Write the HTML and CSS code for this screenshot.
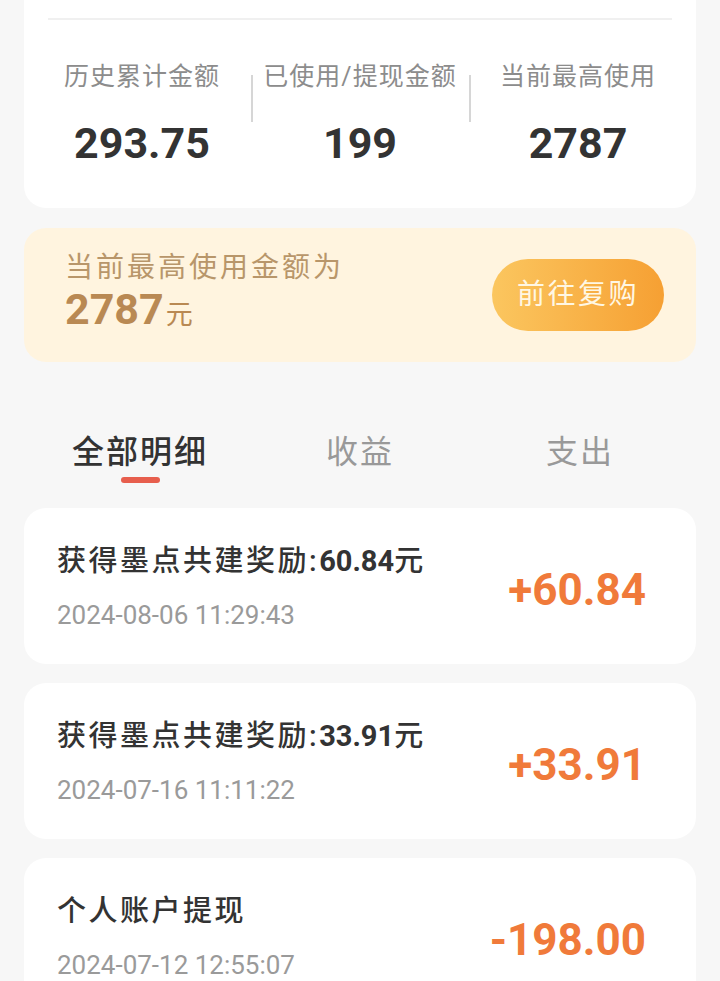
FILE: index.html
```html
<!DOCTYPE html>
<html lang="zh-CN">

<head>
    <meta charset="UTF-8">
    <title>我的账户明细</title>
    <link rel="stylesheet" href="styles.css">
</head>

<body>
    <div class="page">
        <!-- 金额汇总 -->
        <div class="summary-card">
            <div class="summary-line"></div>
            <div class="stats">
                <div class="stat">
                    <div class="stat-label">历史累计金额</div>
                    <div class="stat-value">293.75</div>
                </div>
                <div class="stat">
                    <div class="stat-label">已使用/提现金额</div>
                    <div class="stat-value">199</div>
                </div>
                <div class="stat">
                    <div class="stat-label">当前最高使用</div>
                    <div class="stat-value">2787</div>
                </div>
            </div>
        </div>

        <div class="limit-box">
            <div class="limit-text">
                <div class="limit-title">当前最高使用金额为</div>
                <div class="limit-amount"><span class="limit-num">2787</span><span class="limit-unit">元</span></div>
            </div>
            <div class="rebuy-btn">前往复购</div>
        </div>

        <div class="tabs">
            <div class="tab active">全部明细</div>
            <div class="tab">收益</div>
            <div class="tab">支出</div>
        </div>

        <div class="records">
            <div class="record">
                <div class="record-info">
                    <div class="record-title">获得墨点共建奖励:<b>60.84</b>元</div>
                    <div class="record-time">2024-08-06 11:29:43</div>
                </div>
                <div class="record-amount">+60.84</div>
            </div>
            <div class="record">
                <div class="record-info">
                    <div class="record-title">获得墨点共建奖励:<b>33.91</b>元</div>
                    <div class="record-time">2024-07-16 11:11:22</div>
                </div>
                <div class="record-amount">+33.91</div>
            </div>
            <div class="record">
                <div class="record-info">
                    <div class="record-title">个人账户提现</div>
                    <div class="record-time">2024-07-12 12:55:07</div>
                </div>
                <div class="record-amount">-198.00</div>
            </div>
        </div>
    </div>
</body>

</html>
```

FILE: styles.css
```css
body {
    font-family: Roboto, "Noto Sans CJK SC", sans-serif;
    margin: 0;
    padding: 0;
    background-color: #f7f7f7;
    color: #333;
}

.page {
    padding: 0 24px;
}

/* 汇总卡片 */
.summary-card {
    background-color: #ffffff;
    border-radius: 0 0 22px 22px;
    padding-top: 18px;
    height: 190px;
}

.summary-line {
    height: 2px;
    margin: 0 24px;
    background-color: #f0f0f0;
}

.stats {
    display: flex;
    padding: 39px 9px 0;
}

.stat {
    flex: 1;
    position: relative;
    text-align: center;
}

.stat + .stat::before {
    content: "";
    position: absolute;
    left: 0;
    top: 16px;
    width: 2px;
    height: 47px;
    background-color: #d6d6d6;
}

.stat-label {
    font-size: 25px;
    line-height: 36px;
    letter-spacing: 1px;
    color: #8c8c8c;
}

.stat-value {
    margin-top: 23px;
    font-size: 43px;
    line-height: 50px;
    font-weight: 700;
    color: #333;
}

/* 最高使用金额 */
.limit-box {
    display: flex;
    align-items: center;
    justify-content: space-between;
    height: 134px;
    margin-top: 20px;
    padding: 0 32px 0 41px;
    background-color: #fff4df;
    border-radius: 22px;
}

.limit-title {
    font-size: 28px;
    line-height: 32px;
    letter-spacing: 3px;
    color: #b8966a;
    margin-top: 6px;
}

.limit-amount {
    line-height: 50px;
    color: #b98953;
}

.limit-num {
    font-size: 43px;
    font-weight: 700;
}

.limit-unit {
    font-size: 27px;
    margin-left: 2px;
}

.rebuy-btn {
    width: 172px;
    height: 72px;
    line-height: 72px;
    text-align: center;
    border-radius: 36px;
    background: linear-gradient(90deg, #fbc65f, #f6a033);
    color: #fff7e3;
    font-size: 28px;
    letter-spacing: 2.5px;
}

/* 标签页 */
.tabs {
    display: flex;
    padding: 67px 6px 0;
}

.tab {
    flex: 1;
    text-align: center;
    font-size: 32px;
    line-height: 46px;
    letter-spacing: 2px;
    color: #999;
}

.tab.active {
    color: #333;
    font-weight: 500;
}

.tab.active::after {
    content: "";
    display: block;
    width: 39px;
    height: 6px;
    margin: 2px auto 0;
    border-radius: 3px;
    background-color: #e75e4d;
}

/* 明细列表 */
.records {
    display: flex;
    flex-direction: column;
    gap: 19px;
    margin-top: 25px;
}

.record {
    display: flex;
    align-items: center;
    justify-content: space-between;
    height: 156px;
    padding: 0 50px 0 33px;
    background-color: #ffffff;
    border-radius: 22px;
    box-sizing: border-box;
}

.record-title {
    font-size: 29px;
    line-height: 40px;
    letter-spacing: 2.5px;
    font-weight: 500;
    color: #333;
}

.record-title b {
    font-weight: 700;
    letter-spacing: 0;
}

.record-time {
    margin-top: 17px;
    font-size: 26px;
    line-height: 34px;
    color: #9a9a9a;
}

.record-amount {
    font-size: 44px;
    font-weight: 700;
    color: #f07a3a;
    margin-top: 8px;
}
```
